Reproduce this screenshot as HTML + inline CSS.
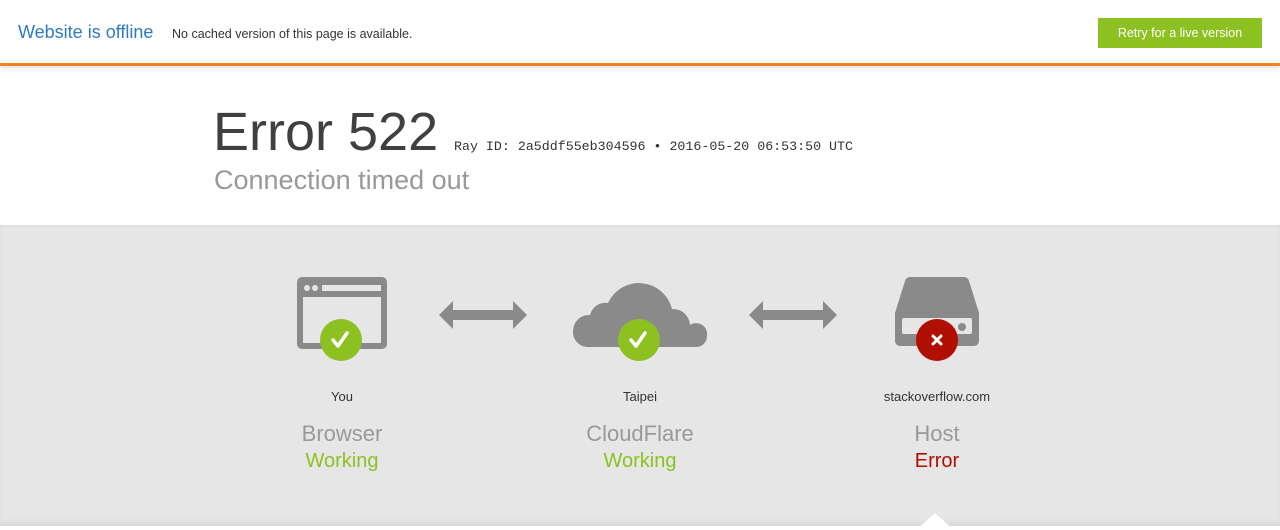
<!DOCTYPE html>
<html><head><meta charset="utf-8"><style>
*{margin:0;padding:0;box-sizing:border-box}
body{width:1280px;height:530px;overflow:hidden;font-family:"Liberation Sans",sans-serif;background:#fff;position:relative}
.hdr{position:absolute;left:0;top:0;width:1280px;height:66px;background:#fff;border-bottom:3px solid #f38020;box-shadow:0 2px 4px rgba(0,0,0,.12)}
.t1{position:absolute;left:18px;top:22px;font-size:18px;color:#2f7bbf}
.t2{position:absolute;left:172px;top:27px;font-size:12.5px;color:#333}
.btn{position:absolute;left:1098px;top:18px;width:164px;height:30px;background:#8dc021;color:#fff;font-size:12.5px;text-align:center;line-height:30px}
.e{position:absolute;left:213px;top:101px;font-size:54px;color:#404040}
.ray{position:absolute;left:454px;top:139px;font-family:"Liberation Mono",monospace;font-size:13.3px;color:#333}
.sub{position:absolute;left:214px;top:165px;font-size:27px;color:#999}
.grey{position:absolute;left:0;top:225px;width:1280px;height:300px;background:#e6e6e6;box-shadow:inset 0 1px 3px rgba(0,0,0,.05)}
.bot{position:absolute;left:0;top:518px;width:1280px;height:8px;background:linear-gradient(#e6e6e6,#d8d8d8)}
.lbl{position:absolute;width:200px;text-align:center}
.s{font-size:13px;color:#333;top:389px}
.b{font-size:22px;color:#999;top:421px}
.w{font-size:20px;color:#8dc021;top:450px}
.r{color:#b20f03}
</style></head><body>
<div class="hdr"><div class="t1">Website is offline</div><div class="t2">No cached version of this page is available.</div><div class="btn">Retry for a live version</div></div>
<div class="e">Error 522</div>
<div class="ray">Ray ID: 2a5ddf55eb304596 • 2016-05-20 06:53:50 UTC</div>
<div class="sub">Connection timed out</div>
<div class="grey"></div>
<div class="bot"></div>
<svg width="1280" height="530" style="position:absolute;left:0;top:0">
<polygon points="916,530 935,513 954,530" fill="#fff"/>
<rect x="297" y="277" width="90" height="72" rx="5" fill="#8a8a8a"/>
<rect x="303" y="297" width="78" height="46" fill="#e6e6e6"/>
<circle cx="307" cy="288" r="3" fill="#e6e6e6"/><circle cx="315" cy="288" r="3" fill="#e6e6e6"/>
<rect x="322" y="285" width="59" height="6" fill="#e6e6e6"/>
<circle cx="341" cy="340" r="21" fill="#8dc021"/>
<path d="M333 340 l5 6 l9 -13" stroke="#fff" stroke-width="3.5" fill="none" stroke-linecap="round" stroke-linejoin="round"/>
<polygon points="439,315 453,301 453,310 513,310 513,301 527,315 513,329 513,320 453,320 453,329" fill="#8a8a8a"/>
<polygon points="749,315 763,301 763,310 823,310 823,301 837,315 823,329 823,320 763,320 763,329" fill="#8a8a8a"/>
<path d="M587 347 a15 15 0 0 1 -14 -16 a16 16 0 0 1 17 -16 a16 16 0 0 1 18 -12 a34 34 0 0 1 64 6 a17 17 0 0 1 18 16 a11 11 0 0 1 17 11 a11 11 0 0 1 -10 11 z" fill="#8a8a8a"/>
<circle cx="639" cy="340" r="21" fill="#8dc021"/>
<path d="M631 340 l5 6 l9 -13" stroke="#fff" stroke-width="3.5" fill="none" stroke-linecap="round" stroke-linejoin="round"/>
<path d="M910 277 h54 a5 5 0 0 1 5 4 l10 32 v28 a5 5 0 0 1 -5 5 h-74 a5 5 0 0 1 -5 -5 v-28 l10 -32 a5 5 0 0 1 5 -4 z" fill="#8a8a8a"/>
<rect x="902" y="318" width="70" height="16" rx="2" fill="#e6e6e6"/>
<circle cx="962" cy="327" r="4" fill="#8a8a8a"/>
<circle cx="937" cy="340" r="21" fill="#b20f03"/>
<path d="M933 336 l8 8 M941 336 l-8 8" stroke="#fff" stroke-width="3" stroke-linecap="round"/>
</svg>
<div class="lbl s" style="left:242px">You</div>
<div class="lbl b" style="left:242px">Browser</div>
<div class="lbl w" style="left:242px">Working</div>
<div class="lbl s" style="left:540px">Taipei</div>
<div class="lbl b" style="left:540px">CloudFlare</div>
<div class="lbl w" style="left:540px">Working</div>
<div class="lbl s" style="left:837px">stackoverflow.com</div>
<div class="lbl b" style="left:837px">Host</div>
<div class="lbl w r" style="left:837px">Error</div>
</body></html>
